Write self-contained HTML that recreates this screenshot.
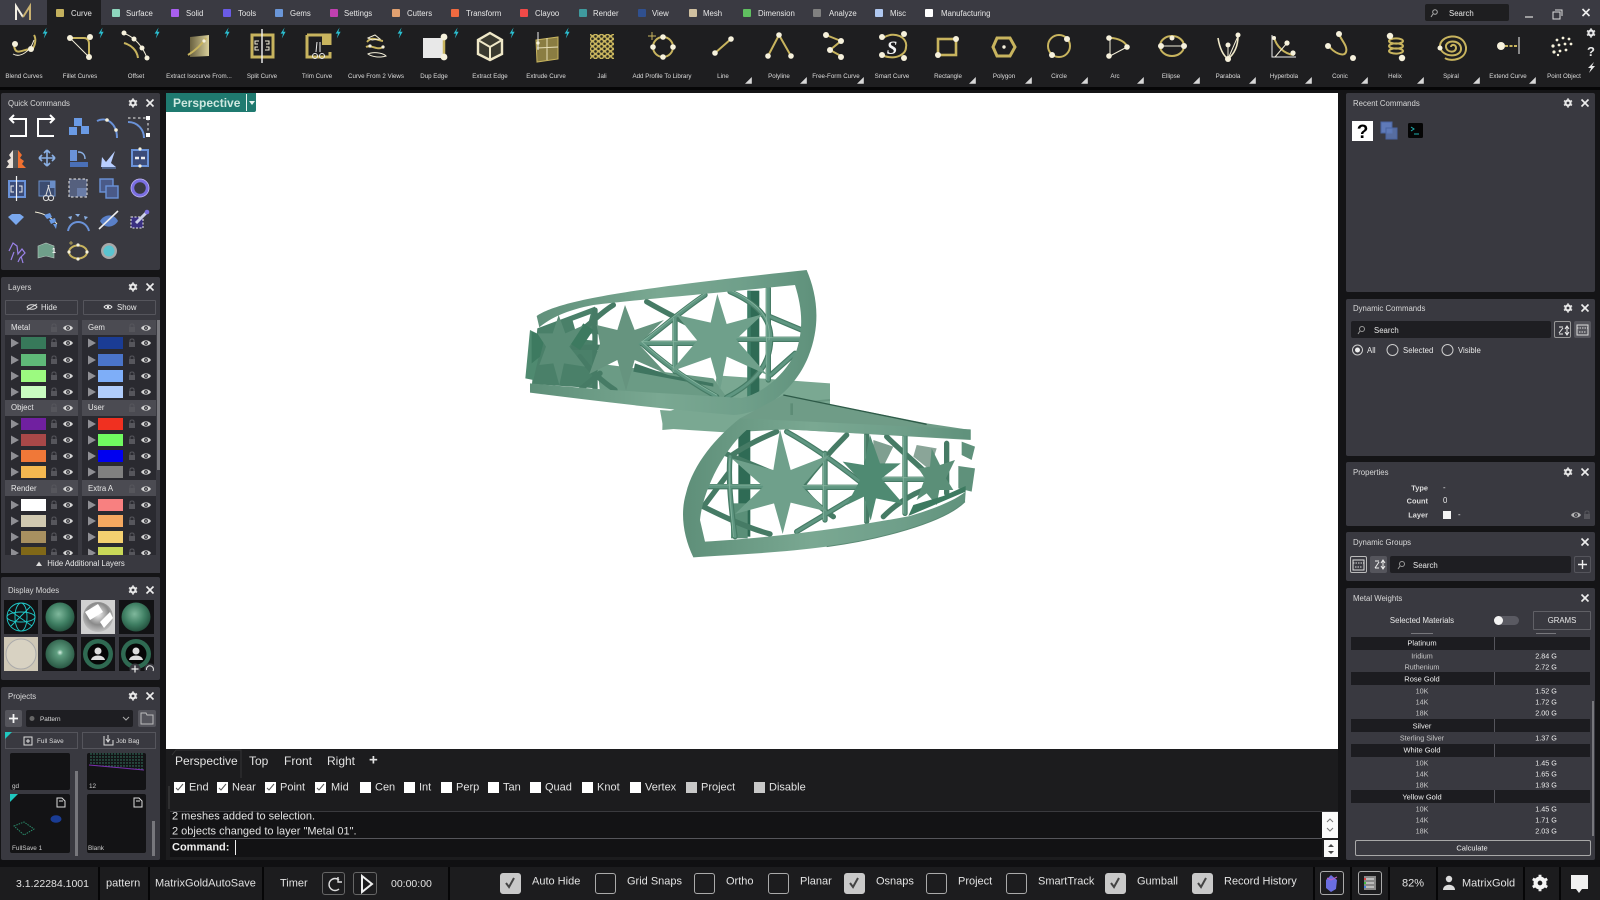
<!DOCTYPE html>
<html><head><meta charset="utf-8"><title>MatrixGold</title>
<style>
html,body{margin:0;padding:0;background:#141416;width:1600px;height:900px;overflow:hidden}
body{position:relative;font-family:"Liberation Sans",sans-serif;color:#ddd}
.b{position:absolute;box-sizing:border-box}
.p{position:absolute;background:#393940;border-radius:2px}
.t{position:absolute;white-space:nowrap;line-height:1;transform:translateY(calc(-50% + 1px))}
.c{transform:translate(-50%,calc(-50% + 1px))}
.r{transform:translate(-100%,calc(-50% + 1px))}
.h{font-size:7.8px;color:#d8d8d8}
.s{font-size:7.8px;color:#e8e8e8}
.l{font-size:6.2px;color:#ddd;top:76px;transform:translate(-50%,calc(-50% + 1px))}
.m{font-size:11px;color:#e2e2e2}
.w{font-size:7.2px;color:#c8c8c8}
.v{font-size:7.2px;color:#eee}
.k{font-size:7.5px;color:#f0f0f0}
.t.w,.t.v,.t.k{transform:translate(-50%,-50%)}
.sq{position:absolute;width:8px;height:8px;top:9px;border-radius:1px}
.cb{position:absolute;width:11px;height:11px;background:#fff;top:782px}
.st{position:absolute;width:21px;height:21px;top:873px;border:1px solid #aaa;border-radius:3px;box-sizing:border-box}
.on{background:#c9c9c9;border-color:#c9c9c9}
.sep{position:absolute;width:2px;top:867px;height:33px;background:#060607}
svg{position:absolute;left:0;top:0;overflow:visible}
.g{stroke:#c8b45e;fill:none;stroke-width:2}
.n{stroke:#f3eed8;fill:none;stroke-width:1}
.d{fill:#f6f1dc}
.u{stroke:#6a92d8;fill:none;stroke-width:2}
.wl{stroke:#fff;fill:none;stroke-width:2}
.tube{fill:none;stroke:#467b65;stroke-width:16;stroke-linecap:round}
.mid{fill:none;stroke:#5f9681;stroke-width:9;stroke-linecap:round}
.hi{fill:none;stroke:#86b6a0;stroke-width:2.5;stroke-linecap:round}
</style></head><body>

<!-- top bar -->
<div class="b" style="left:0;top:0;width:1600px;height:25px;background:#3a3a42"></div>
<div class="b" style="left:47px;top:0;width:54px;height:25px;background:#1e1e20"></div>
<div class="b" style="left:0;top:25px;width:1600px;height:62px;background:#1e1e20"></div>
<div class="b" style="left:0;top:87px;width:1600px;height:3px;background:#060607"></div>

<i class="sq" style="left:56px;background:#c4b15e"></i><div class="t s" style="left:71px;top:13px">Curve</div>
<i class="sq" style="left:112px;background:#8ed6bd"></i><div class="t s" style="left:126px;top:13px">Surface</div>
<i class="sq" style="left:171px;background:#a95ff0"></i><div class="t s" style="left:186px;top:13px">Solid</div>
<i class="sq" style="left:223px;background:#6a5be6"></i><div class="t s" style="left:238px;top:13px">Tools</div>
<i class="sq" style="left:275px;background:#6a96d8"></i><div class="t s" style="left:290px;top:13px">Gems</div>
<i class="sq" style="left:330px;background:#c040b0"></i><div class="t s" style="left:344px;top:13px">Settings</div>
<i class="sq" style="left:392px;background:#e0a070"></i><div class="t s" style="left:407px;top:13px">Cutters</div>
<i class="sq" style="left:451px;background:#f06a40"></i><div class="t s" style="left:466px;top:13px">Transform</div>
<i class="sq" style="left:520px;background:#f04a48"></i><div class="t s" style="left:535px;top:13px">Clayoo</div>
<i class="sq" style="left:579px;background:#3f9a9e"></i><div class="t s" style="left:593px;top:13px">Render</div>
<i class="sq" style="left:638px;background:#30508f"></i><div class="t s" style="left:652px;top:13px">View</div>
<i class="sq" style="left:689px;background:#d0c0a0"></i><div class="t s" style="left:703px;top:13px">Mesh</div>
<i class="sq" style="left:743px;background:#60c060"></i><div class="t s" style="left:758px;top:13px">Dimension</div>
<i class="sq" style="left:813px;background:#808080"></i><div class="t s" style="left:829px;top:13px">Analyze</div>
<i class="sq" style="left:875px;background:#b0c8f0"></i><div class="t s" style="left:890px;top:13px">Misc</div>
<i class="sq" style="left:925px;background:#fff"></i><div class="t s" style="left:941px;top:13px">Manufacturing</div>

<div class="b" style="left:1425px;top:4px;width:84px;height:17px;background:#1e1e20;border-radius:2px"></div>
<div class="t s" style="left:1449px;top:13px">Search</div>

<!-- toolbar labels -->
<div class="t l" style="left:24px">Blend Curves</div>
<div class="t l" style="left:80px">Fillet Curves</div>
<div class="t l" style="left:136px">Offset</div>
<div class="t l" style="left:199px">Extract Isocurve From...</div>
<div class="t l" style="left:262px">Split Curve</div>
<div class="t l" style="left:317px">Trim Curve</div>
<div class="t l" style="left:376px">Curve From 2 Views</div>
<div class="t l" style="left:434px">Dup Edge</div>
<div class="t l" style="left:490px">Extract Edge</div>
<div class="t l" style="left:546px">Extrude Curve</div>
<div class="t l" style="left:602px">Jali</div>
<div class="t l" style="left:662px">Add Profile To Library</div>
<div class="t l" style="left:723px">Line</div>
<div class="t l" style="left:779px">Polyline</div>
<div class="t l" style="left:836px">Free-Form Curve</div>
<div class="t l" style="left:892px">Smart Curve</div>
<div class="t l" style="left:948px">Rectangle</div>
<div class="t l" style="left:1004px">Polygon</div>
<div class="t l" style="left:1059px">Circle</div>
<div class="t l" style="left:1115px">Arc</div>
<div class="t l" style="left:1171px">Ellipse</div>
<div class="t l" style="left:1228px">Parabola</div>
<div class="t l" style="left:1284px">Hyperbola</div>
<div class="t l" style="left:1340px">Conic</div>
<div class="t l" style="left:1395px">Helix</div>
<div class="t l" style="left:1451px">Spiral</div>
<div class="t l" style="left:1508px">Extend Curve</div>
<div class="t l" style="left:1564px">Point Object</div>

<!-- viewport -->
<div class="b" style="left:166px;top:93px;width:1172px;height:656px;background:#fff"></div>
<div class="b" style="left:166px;top:93px;width:90px;height:19px;background:#1f7a70;border-radius:0 0 2px 0"></div>
<div class="t" style="left:173px;top:102px;font-size:12px;color:#cfe8e0;font-weight:bold">Perspective</div>
<div class="b" style="left:246px;top:94px;width:1px;height:17px;background:#e8f4f0"></div>

<!-- below viewport -->
<div class="b" style="left:166px;top:749px;width:1172px;height:111px;background:#1c1c1e"></div>
<div class="t m" style="left:175px;top:760px;font-size:12px">Perspective</div>
<div class="t m" style="left:249px;top:760px;font-size:12px">Top</div>
<div class="t m" style="left:284px;top:760px;font-size:12px">Front</div>
<div class="t m" style="left:327px;top:760px;font-size:12px">Right</div>
<div class="t m" style="left:369px;top:759px;font-size:15px;font-weight:bold">+</div>

<i class="cb" style="left:174px"></i><div class="t m" style="left:189px;top:787px">End</div>
<i class="cb" style="left:217px"></i><div class="t m" style="left:232px;top:787px">Near</div>
<i class="cb" style="left:265px"></i><div class="t m" style="left:280px;top:787px">Point</div>
<i class="cb" style="left:315px"></i><div class="t m" style="left:331px;top:787px">Mid</div>
<i class="cb" style="left:360px"></i><div class="t m" style="left:375px;top:787px">Cen</div>
<i class="cb" style="left:404px"></i><div class="t m" style="left:419px;top:787px">Int</div>
<i class="cb" style="left:441px"></i><div class="t m" style="left:456px;top:787px">Perp</div>
<i class="cb" style="left:488px"></i><div class="t m" style="left:503px;top:787px">Tan</div>
<i class="cb" style="left:530px"></i><div class="t m" style="left:545px;top:787px">Quad</div>
<i class="cb" style="left:582px"></i><div class="t m" style="left:597px;top:787px">Knot</div>
<i class="cb" style="left:630px"></i><div class="t m" style="left:645px;top:787px">Vertex</div>
<i class="cb" style="left:686px;background:#c8c8c8"></i><div class="t m" style="left:701px;top:787px">Project</div>
<i class="cb" style="left:754px;background:#c8c8c8"></i><div class="t m" style="left:769px;top:787px">Disable</div>

<div class="b" style="left:170px;top:811px;width:1168px;height:1px;background:#3a3a3e"></div>
<div class="b" style="left:170px;top:812px;width:1152px;height:26px;background:#131315"></div>
<div class="b" style="left:170px;top:838px;width:1152px;height:1px;background:#55555a"></div>
<div class="b" style="left:170px;top:839px;width:1152px;height:18px;background:#121214"></div>
<div class="t m" style="left:172px;top:816px">2 meshes added to selection.</div>
<div class="t m" style="left:172px;top:831px">2 objects changed to layer "Metal 01".</div>
<div class="t m" style="left:172px;top:847px;font-weight:bold;color:#eee">Command:</div>
<div class="b" style="left:235px;top:840px;width:1px;height:15px;background:#eee"></div>
<div class="b" style="left:1322px;top:812px;width:16px;height:26px;background:#fafafa"></div>
<div class="b" style="left:1324px;top:840px;width:14px;height:17px;background:#fafafa"></div>

<!-- left panels -->
<div class="p" style="left:1px;top:93px;width:159px;height:177px"></div>
<div class="t h" style="left:8px;top:103px">Quick Commands</div>
<div class="p" style="left:1px;top:277px;width:159px;height:296px"></div>
<div class="t h" style="left:8px;top:287px">Layers</div>

<div class="b" style="left:5px;top:300px;width:73px;height:15px;border:1px solid #55555c;border-radius:1px"></div>
<div class="b" style="left:83px;top:300px;width:73px;height:15px;border:1px solid #55555c;border-radius:1px"></div>
<div class="t s" style="left:41px;top:307px">Hide</div>
<div class="t s" style="left:117px;top:307px">Show</div>

<div class="b" style="left:5px;top:320px;width:73px;height:235px;background:#2a2a30"></div>
<div class="b" style="left:82px;top:320px;width:74px;height:235px;background:#2a2a30"></div>
<div class="b" style="left:5px;top:320px;width:73px;height:15px;background:#4b4b52"></div>
<div class="b" style="left:82px;top:320px;width:74px;height:15px;background:#4b4b52"></div>
<div class="b" style="left:5px;top:400px;width:73px;height:16px;background:#4b4b52"></div>
<div class="b" style="left:82px;top:400px;width:74px;height:16px;background:#4b4b52"></div>
<div class="b" style="left:5px;top:480px;width:73px;height:16px;background:#4b4b52"></div>
<div class="b" style="left:82px;top:480px;width:74px;height:16px;background:#4b4b52"></div>
<div class="t s" style="left:11px;top:327px">Metal</div>
<div class="t s" style="left:88px;top:327px">Gem</div>
<div class="t s" style="left:11px;top:407px">Object</div>
<div class="t s" style="left:88px;top:407px">User</div>
<div class="t s" style="left:11px;top:488px">Render</div>
<div class="t s" style="left:88px;top:488px">Extra A</div>
<div class="b" style="left:157px;top:320px;width:3px;height:150px;background:#77777c"></div>
<div class="t s c" style="left:86px;top:563px;z-index:6">Hide Additional Layers</div>

<div class="p" style="left:1px;top:577px;width:159px;height:103px"></div>
<div class="t h" style="left:8px;top:590px">Display Modes</div>
<div class="p" style="left:1px;top:687px;width:159px;height:173px"></div>
<div class="t h" style="left:8px;top:696px">Projects</div>

<div class="b" style="left:5px;top:710px;width:17px;height:17px;background:#55555c;border-radius:2px"></div>
<div class="b" style="left:26px;top:710px;width:107px;height:17px;background:#1e1e22;border-radius:2px"></div>
<div class="b" style="left:138px;top:710px;width:18px;height:17px;background:#55555c;border-radius:2px"></div>
<div class="t" style="left:40px;top:719px;font-size:6.4px;color:#ddd">Pattern</div>
<div class="b" style="left:5px;top:732px;width:73px;height:17px;border:1px solid #55555c"></div>
<div class="b" style="left:82px;top:732px;width:74px;height:17px;border:1px solid #55555c"></div>
<div class="t" style="left:37px;top:741px;font-size:6.4px;color:#ddd">Full Save</div>
<div class="t" style="left:116px;top:741px;font-size:6.4px;color:#ddd">Job Bag</div>
<div class="b" style="left:10px;top:753px;width:60px;height:37px;background:#131315;border-radius:2px"></div>
<div class="b" style="left:87px;top:753px;width:59px;height:37px;background:#131315;border-radius:2px"></div>
<div class="b" style="left:10px;top:794px;width:60px;height:59px;background:#131315;border-radius:2px"></div>
<div class="b" style="left:87px;top:794px;width:59px;height:59px;background:#131315;border-radius:2px"></div>
<div class="t" style="left:12px;top:786px;font-size:6.4px;color:#ccc">gd</div>
<div class="t" style="left:89px;top:786px;font-size:6.4px;color:#ccc">12</div>
<div class="t" style="left:12px;top:848px;font-size:6.4px;color:#ccc">FullSave 1</div>
<div class="t" style="left:88px;top:848px;font-size:6.4px;color:#ccc">Blank</div>
<div class="b" style="left:75px;top:771px;width:3px;height:85px;background:#77777c"></div>
<div class="b" style="left:152px;top:821px;width:3px;height:35px;background:#77777c"></div>

<!-- right panels -->
<div class="p" style="left:1346px;top:93px;width:249px;height:199px"></div>
<div class="t h" style="left:1353px;top:103px">Recent Commands</div>
<div class="p" style="left:1346px;top:299px;width:249px;height:157px"></div>
<div class="t h" style="left:1353px;top:308px">Dynamic Commands</div>
<div class="b" style="left:1351px;top:321px;width:200px;height:17px;background:#1e1e22;border-radius:2px"></div>
<div class="t s" style="left:1374px;top:330px">Search</div>
<div class="b" style="left:1554px;top:321px;width:17px;height:17px;border:1px solid #999;border-radius:2px"></div>
<div class="b" style="left:1574px;top:321px;width:17px;height:17px;background:#55555c;border-radius:2px"></div>
<div class="t s" style="left:1367px;top:350px">All</div>
<div class="t s" style="left:1403px;top:350px">Selected</div>
<div class="t s" style="left:1458px;top:350px">Visible</div>

<div class="p" style="left:1346px;top:462px;width:249px;height:64px"></div>
<div class="t h" style="left:1353px;top:472px">Properties</div>
<div class="t s r" style="left:1428px;top:487px;font-weight:bold;color:#ddd;font-size:7.4px">Type</div>
<div class="t s r" style="left:1428px;top:500px;font-weight:bold;color:#ddd;font-size:7.4px">Count</div>
<div class="t s r" style="left:1428px;top:514px;font-weight:bold;color:#ddd;font-size:7.4px">Layer</div>
<div class="t s" style="left:1443px;top:487px">-</div>
<div class="t s" style="left:1443px;top:500px">0</div>
<div class="b" style="left:1443px;top:511px;width:8px;height:8px;background:#f4f4f4"></div>
<div class="t s" style="left:1458px;top:514px">-</div>

<div class="p" style="left:1346px;top:532px;width:249px;height:49px"></div>
<div class="t h" style="left:1353px;top:542px">Dynamic Groups</div>
<div class="b" style="left:1350px;top:556px;width:17px;height:17px;border:1px solid #bbb;border-radius:2px"></div>
<div class="b" style="left:1370px;top:556px;width:17px;height:17px;background:#55555c;border-radius:2px"></div>
<div class="b" style="left:1390px;top:556px;width:181px;height:17px;background:#1e1e22;border-radius:2px"></div>
<div class="t s" style="left:1413px;top:565px">Search</div>
<div class="b" style="left:1574px;top:556px;width:17px;height:17px;border:1px solid #55555c;border-radius:2px"></div>

<div class="p" style="left:1346px;top:588px;width:249px;height:272px"></div>
<div class="t h" style="left:1353px;top:598px">Metal Weights</div>
<div class="t s c" style="left:1422px;top:620px">Selected Materials</div>
<div class="b" style="left:1494px;top:616px;width:25px;height:9px;background:#5a5a62;border-radius:5px"></div>
<div class="b" style="left:1494px;top:616px;width:9px;height:9px;background:#f4f4f4;border-radius:50%"></div>
<div class="b" style="left:1533px;top:611px;width:58px;height:19px;border:1px solid #606066;border-radius:1px"></div>
<div class="t s c" style="left:1562px;top:620px">GRAMS</div>

<div class="b" style="left:1411px;top:633px;width:22px;height:1px;background:#77777c"></div>
<div class="b" style="left:1536px;top:633px;width:20px;height:1px;background:#77777c"></div>
<div class="b" style="left:1351px;top:637px;width:239px;height:13px;background:#1c1c20"></div>
<div class="b" style="left:1351px;top:672px;width:239px;height:13px;background:#1c1c20"></div>
<div class="b" style="left:1351px;top:719px;width:239px;height:13px;background:#1c1c20"></div>
<div class="b" style="left:1351px;top:744px;width:239px;height:13px;background:#1c1c20"></div>
<div class="b" style="left:1351px;top:790px;width:239px;height:13px;background:#1c1c20"></div>
<div class="b" style="left:1494px;top:637px;width:1px;height:13px;background:#55555c"></div>
<div class="b" style="left:1494px;top:672px;width:1px;height:13px;background:#55555c"></div>
<div class="b" style="left:1494px;top:719px;width:1px;height:13px;background:#55555c"></div>
<div class="b" style="left:1494px;top:744px;width:1px;height:13px;background:#55555c"></div>
<div class="b" style="left:1494px;top:790px;width:1px;height:13px;background:#55555c"></div>
<div class="b" style="left:1592px;top:701px;width:2px;height:135px;background:#77777c"></div>

<div class="t k c" style="left:1422px;top:643px">Platinum</div>
<div class="t w c" style="left:1422px;top:656px">Iridium</div><div class="t v c" style="left:1546px;top:656px">2.84 G</div>
<div class="t w c" style="left:1422px;top:667px">Ruthenium</div><div class="t v c" style="left:1546px;top:667px">2.72 G</div>
<div class="t k c" style="left:1422px;top:679px">Rose Gold</div>
<div class="t w c" style="left:1422px;top:691px">10K</div><div class="t v c" style="left:1546px;top:691px">1.52 G</div>
<div class="t w c" style="left:1422px;top:702px">14K</div><div class="t v c" style="left:1546px;top:702px">1.72 G</div>
<div class="t w c" style="left:1422px;top:713px">18K</div><div class="t v c" style="left:1546px;top:713px">2.00 G</div>
<div class="t k c" style="left:1422px;top:726px">Silver</div>
<div class="t w c" style="left:1422px;top:738px">Sterling Silver</div><div class="t v c" style="left:1546px;top:738px">1.37 G</div>
<div class="t k c" style="left:1422px;top:750px">White Gold</div>
<div class="t w c" style="left:1422px;top:763px">10K</div><div class="t v c" style="left:1546px;top:763px">1.45 G</div>
<div class="t w c" style="left:1422px;top:774px">14K</div><div class="t v c" style="left:1546px;top:774px">1.65 G</div>
<div class="t w c" style="left:1422px;top:785px">18K</div><div class="t v c" style="left:1546px;top:785px">1.93 G</div>
<div class="t k c" style="left:1422px;top:797px">Yellow Gold</div>
<div class="t w c" style="left:1422px;top:809px">10K</div><div class="t v c" style="left:1546px;top:809px">1.45 G</div>
<div class="t w c" style="left:1422px;top:820px">14K</div><div class="t v c" style="left:1546px;top:820px">1.71 G</div>
<div class="t w c" style="left:1422px;top:831px">18K</div><div class="t v c" style="left:1546px;top:831px">2.03 G</div>
<div class="b" style="left:1355px;top:840px;width:236px;height:16px;border:1px solid #a8a8a8;border-radius:2px"></div>
<div class="t k c" style="left:1472px;top:848px">Calculate</div>

<!-- status bar -->
<div class="b" style="left:0;top:860px;width:1600px;height:7px;background:#101012"></div>
<div class="b" style="left:0;top:867px;width:1600px;height:33px;background:#1c1c1e"></div>
<i class="sep" style="left:98px"></i><i class="sep" style="left:148px"></i><i class="sep" style="left:262px"></i><i class="sep" style="left:448px"></i>
<i class="sep" style="left:1313px"></i><i class="sep" style="left:1350px"></i><i class="sep" style="left:1388px"></i><i class="sep" style="left:1436px"></i><i class="sep" style="left:1523px"></i><i class="sep" style="left:1559px"></i>
<div class="t m" style="left:16px;top:883px;font-size:10.5px">3.1.22284.1001</div>
<div class="t m" style="left:106px;top:883px">pattern</div>
<div class="t m" style="left:155px;top:883px">MatrixGoldAutoSave</div>
<div class="t m" style="left:280px;top:883px">Timer</div>
<div class="t m" style="left:391px;top:883px;font-size:10.5px">00:00:00</div>
<div class="b" style="left:322px;top:872px;width:23px;height:23px;border:1px solid #666;border-radius:3px"></div>
<div class="b" style="left:353px;top:872px;width:24px;height:23px;border:1px solid #666;border-radius:3px"></div>
<i class="st on" style="left:500px"></i><div class="t m" style="left:532px;top:881px">Auto Hide</div>
<i class="st" style="left:595px"></i><div class="t m" style="left:627px;top:881px">Grid Snaps</div>
<i class="st" style="left:694px"></i><div class="t m" style="left:726px;top:881px">Ortho</div>
<i class="st" style="left:768px"></i><div class="t m" style="left:800px;top:881px">Planar</div>
<i class="st on" style="left:844px"></i><div class="t m" style="left:876px;top:881px">Osnaps</div>
<i class="st" style="left:926px"></i><div class="t m" style="left:958px;top:881px">Project</div>
<i class="st" style="left:1006px"></i><div class="t m" style="left:1038px;top:881px">SmartTrack</div>
<i class="st on" style="left:1105px"></i><div class="t m" style="left:1137px;top:881px">Gumball</div>
<i class="st on" style="left:1192px"></i><div class="t m" style="left:1224px;top:881px">Record History</div>
<div class="b" style="left:1320px;top:871px;width:24px;height:24px;border:1px solid #aaa;border-radius:3px"></div>
<div class="b" style="left:1358px;top:871px;width:24px;height:24px;border:1px solid #aaa;border-radius:3px"></div>
<div class="t m" style="left:1402px;top:883px">82%</div>
<div class="t m" style="left:1462px;top:883px">MatrixGold</div>

<!-- icon overlay -->
<svg width="1600" height="900" viewBox="0 0 1600 900" style="z-index:5">
<defs>
<g id="eye"><path d="M-5 0C-3-3.5 3-3.5 5 0C3 3.5-3 3.5-5 0Z" fill="#d4d4d4"/><circle r="1.9" fill="#2a2a30"/><circle r=".8" fill="#d4d4d4"/></g>
<g id="lock"><rect x="-3" y="-1" width="6" height="5" fill="#56565c"/><path d="M-2-1V-2.5C-2-4.5 2-4.5 2-2.5V-1" stroke="#56565c" fill="none"/></g>
<path id="tri" d="M0-4.5L8 0L0 4.5Z" fill="#8f8f94"/>
<g id="gear"><circle r="2.6" fill="none" stroke="#e8e8e8" stroke-width="2"/><path d="M0-4.6V4.6M-4-2.3L4 2.3M-4 2.3L4-2.3" stroke="#e8e8e8" stroke-width="1.6"/><circle r="1.4" fill="#393940"/></g>
<path id="x" d="M-3.5-3.5L3.5 3.5M3.5-3.5L-3.5 3.5" stroke="#eee" stroke-width="1.6" fill="none"/>
<path id="bolt" d="M1.6-5.5L-2.4 .6H0L-1.2 5.5L2.6-1.2H.3Z" fill="#2bbfd0"/>
<path id="ct" d="M4 0V4H0Z" fill="#d8d8d8" transform="scale(1.7)"/>
<radialGradient id="sp" cx=".45" cy=".4" r=".65"><stop offset="0" stop-color="#7fb89c"/><stop offset=".55" stop-color="#3f7f63"/><stop offset="1" stop-color="#1f4a38"/></radialGradient>
<radialGradient id="sp2" cx=".5" cy=".45" r=".6"><stop offset="0" stop-color="#d8f0e4"/><stop offset=".18" stop-color="#5f9e80"/><stop offset="1" stop-color="#23503d"/></radialGradient>
<radialGradient id="chrome" cx=".5" cy=".4" r=".6"><stop offset="0" stop-color="#f4f4f4"/><stop offset=".6" stop-color="#8a8a8a"/><stop offset="1" stop-color="#c0c0c0"/></radialGradient>
<linearGradient id="band" x1="0" x2="1" y1="0" y2="0"><stop offset="0" stop-color="#5e8f79"/><stop offset=".45" stop-color="#7aa892"/><stop offset=".75" stop-color="#6f9f8a"/><stop offset="1" stop-color="#5f917b"/></linearGradient>
<linearGradient id="iso" x1="0" x2="1"><stop offset="0" stop-color="#6a6140"/><stop offset="1" stop-color="#d8cf9a"/></linearGradient>
<pattern id="hex" width="6" height="5" patternUnits="userSpaceOnUse"><rect width="6" height="5" fill="#c8b45e"/><circle cx="1.5" cy="1.4" r="1.3" fill="#2a2a20"/><circle cx="4.5" cy="3.8" r="1.3" fill="#2a2a20"/></pattern>
<pattern id="dots" width="3" height="3" patternUnits="userSpaceOnUse"><rect width="3" height="3" fill="#131315"/><circle cx="1" cy="1" r=".7" fill="#3c8a70"/></pattern>
</defs>

<!-- logo -->
<rect x="0" y="0" width="47" height="25" fill="#47474f" opacity=".35"/>
<path d="M16 20V6L23 17" fill="none" stroke="#f4f0e4" stroke-width="2"/>
<path d="M23 17L30 6V20" fill="none" stroke="#c8b070" stroke-width="2"/>

<!-- perspective dropdown -->
<path d="M249 101H255L252 105Z" fill="#e8f4f0"/>

<!-- window controls -->
<path d="M1525 17H1533" stroke="#ddd" stroke-width="1.2"/>
<path d="M1555 10H1562V16M1553 12H1560V19H1553Z" stroke="#ddd" fill="none"/>
<use href="#x" x="1586" y="12.5"/>
<circle cx="1435" cy="12" r="2.3" fill="none" stroke="#aaa"/><path d="M1433 14L1431 17" stroke="#aaa"/>

<!-- toolbar bolts -->
<use href="#bolt" x="45" y="33"/><use href="#bolt" x="101" y="33"/><use href="#bolt" x="157" y="33"/><use href="#bolt" x="227" y="33"/><use href="#bolt" x="283" y="33"/><use href="#bolt" x="338" y="33"/><use href="#bolt" x="400" y="33"/><use href="#bolt" x="456" y="33"/><use href="#bolt" x="512" y="33"/><use href="#bolt" x="567" y="33"/>
<!-- corner triangles -->
<use href="#ct" x="745" y="77"/><use href="#ct" x="800" y="77"/><use href="#ct" x="857" y="77"/><use href="#ct" x="969" y="77"/><use href="#ct" x="1025" y="77"/><use href="#ct" x="1081" y="77"/><use href="#ct" x="1137" y="77"/><use href="#ct" x="1193" y="77"/><use href="#ct" x="1249" y="77"/><use href="#ct" x="1305" y="77"/><use href="#ct" x="1361" y="77"/><use href="#ct" x="1417" y="77"/><use href="#ct" x="1473" y="77"/><use href="#ct" x="1529" y="77"/>

<!-- toolbar icons -->
<path class="g" d="M14 43C14 60 26 46 32 50C36 44 36 38 34 35"/><path class="n" d="M13 54C20 58 30 52 34 40"/><circle class="d" cx="15" cy="44" r="3"/><circle class="d" cx="31" cy="49" r="3"/>
<path class="g" d="M70 38H84Q89 38 89 44V56" stroke-width="3"/><path class="n" d="M70 38L89 57" stroke-width=".6"/><circle class="d" cx="70" cy="38" r="3"/><circle class="d" cx="90" cy="37" r="3"/><circle class="d" cx="89" cy="57" r="3"/>
<path class="g" d="M124 43C131 45 137 50 138 58" stroke-width="3"/><path class="n" d="M123 33C135 37 143 47 147 58"/><circle class="d" cx="124" cy="33" r="2.5"/><circle class="d" cx="134" cy="39" r="2.5"/><circle class="d" cx="142" cy="48" r="2.5"/><circle class="d" cx="147" cy="58" r="2.5"/>
<path d="M190 37L209 35V56L190 57Z" fill="url(#iso)"/><path class="g" d="M188 55C196 50 202 44 206 38"/><circle class="d" cx="204" cy="41" r="1.6"/>
<rect x="252" y="35" width="21" height="22" fill="none" stroke="#c8b45e" stroke-width="3"/><path d="M262 29V63" stroke="#f4f4f4" stroke-width="1.4"/><path class="n" d="M259 41H255V44H258M259 50H255V47H258M265 41H269V44H266M265 50H269V47H266"/>
<path d="M307 35H330V45M307 35V57H330V52" fill="none" stroke="#c8b45e" stroke-width="3"/><rect x="322" y="35" width="8" height="10" fill="#c8b45e"/><path d="M317 42L316 52M320 42L320 52" stroke="#eee" fill="none"/><circle cx="315" cy="56" r="2.5" fill="none" stroke="#eee"/><circle cx="322" cy="56" r="2.5" fill="none" stroke="#eee"/>
<path class="g" d="M367 42C372 36 376 40 383 41M366 47C372 44 378 52 384 46"/><path class="n" d="M368 38L375 35L380 39L372 40ZM368 54C372 52 382 52 386 56C380 58 372 57 368 54Z"/><circle class="d" cx="370" cy="46" r="1.6"/><circle class="d" cx="383" cy="47" r="1.6"/>
<rect x="423" y="38" width="20" height="20" fill="#e8e8e8"/><path d="M444 37V57" stroke="#c8b45e" stroke-width="2.5"/><circle class="d" cx="444" cy="37" r="3.4"/><circle class="d" cx="444" cy="57" r="3.4"/>
<path d="M490 33L502 40V54L490 60L478 54V40Z" fill="#3a3a30" stroke="#efe8c8" stroke-width="2.4"/><path d="M478 40L490 47L502 40M490 47V60" stroke="#efe8c8" stroke-width="2" fill="none"/>
<path d="M536 40L558 37V59L537 62Z" fill="#8a7d42" stroke="#c8b45e"/><path d="M537 48L558 47M547 38V60" stroke="#e8e0b8"/><path d="M538 32V50" stroke="#eee"/><circle class="d" cx="538" cy="43" r="1.6"/>
<rect x="590" y="34" width="24" height="25" fill="url(#hex)"/>
<circle cx="663" cy="47" r="10" class="g" stroke-width="3"/><circle class="d" cx="663" cy="37" r="2.8"/><circle class="d" cx="663" cy="57" r="2.8"/><circle class="d" cx="653" cy="47" r="2.8"/><circle class="d" cx="673" cy="47" r="2.8"/><path d="M652 32V40M648 36H656" stroke="#c8b45e"/>
<path class="g" d="M715 53L731 39"/><circle class="d" cx="715" cy="53" r="2.8"/><circle class="d" cx="731" cy="39" r="2.8"/>
<path class="g" d="M768 56L779 35L791 56" stroke-width="2.4"/><circle class="d" cx="768" cy="56" r="2.8"/><circle class="d" cx="779" cy="35" r="2.8"/><circle class="d" cx="791" cy="56" r="2.8"/>
<path class="g" d="M826 35L841 41L830 50L841 56" stroke-width="3"/><circle class="d" cx="826" cy="35" r="3"/><circle class="d" cx="841" cy="41" r="3"/><circle class="d" cx="830" cy="50" r="3"/><circle class="d" cx="841" cy="57" r="3"/>
<path class="g" d="M883 38C895 30 908 38 906 47C906 54 897 60 884 56"/><text x="892" y="54" font-family="Liberation Serif,serif" font-weight="bold" font-style="italic" font-size="19" fill="#f4f4f4" text-anchor="middle">S</text><circle class="d" cx="904" cy="34" r="3"/><circle class="d" cx="882" cy="37" r="3"/><circle class="d" cx="882" cy="55" r="3"/><circle class="d" cx="904" cy="58" r="3"/>
<rect x="938" y="39" width="18" height="16" fill="none" stroke="#c8b45e" stroke-width="2.6"/><circle class="d" cx="956" cy="39" r="3"/><circle class="d" cx="938" cy="55" r="3"/>
<path d="M997 38H1010L1015 47L1010 56H997L993 47Z" fill="none" stroke="#c8b45e" stroke-width="3"/><circle class="d" cx="1004" cy="47" r="1.7"/>
<circle cx="1059" cy="46" r="11" class="g" stroke-width="2.6"/><circle class="d" cx="1067" cy="39" r="3"/><circle class="d" cx="1052" cy="55" r="3"/>
<path class="g" d="M1110 38C1118 38 1127 42 1127 48" stroke-width="2.6"/><path class="n" d="M1110 38V56L1127 47" stroke-width=".6"/><circle class="d" cx="1109" cy="38" r="2.8"/><circle class="d" cx="1127" cy="47" r="2.8"/><circle class="d" cx="1109" cy="56" r="2.8"/>
<ellipse cx="1172" cy="46" rx="12" ry="10" class="g" stroke-width="2.6"/><path class="n" d="M1160 46H1184"/><circle class="d" cx="1161" cy="46" r="3"/><circle class="d" cx="1184" cy="46" r="3"/><circle class="d" cx="1172" cy="38" r="2.5"/>
<path d="M1218 38C1220 50 1224 56 1228 59C1234 54 1238 46 1238 36" fill="none" stroke="#efe8c8" stroke-width="1.6"/><path class="n" d="M1228 45V59M1238 36L1228 59"/><circle class="d" cx="1238" cy="35" r="2.5"/><circle class="d" cx="1228" cy="45" r="2.5"/><circle class="d" cx="1228" cy="59" r="3"/>
<path d="M1272 35V57H1296" fill="none" stroke="#eee"/><path class="g" d="M1274 37C1276 46 1284 54 1294 55" stroke-width="2.4"/><path class="n" d="M1275 57L1287 43" stroke-width=".6"/><circle class="d" cx="1287" cy="43" r="2.6"/><circle class="d" cx="1293" cy="53" r="2.6"/><circle class="d" cx="1274" cy="38" r="2"/>
<path class="g" d="M1329 46C1333 52 1344 58 1346 52C1348 46 1341 40 1339 34" stroke-width="2.4"/><circle class="d" cx="1339" cy="34" r="3"/><circle class="d" cx="1328" cy="46" r="3"/><circle class="d" cx="1353" cy="58" r="3"/>
<g class="g" stroke-width="2.6"><ellipse cx="1396" cy="41" rx="7" ry="2.6"/><ellipse cx="1396" cy="46" rx="7" ry="2.6"/><ellipse cx="1396" cy="51" rx="7" ry="2.6"/></g><circle class="d" cx="1390" cy="36" r="3.2"/><circle class="d" cx="1402" cy="58" r="3.2"/>
<path class="g" d="M1451 47C1451 44 1456 44 1456 48C1456 53 1447 53 1446 47C1445 40 1460 39 1461 48C1462 58 1442 58 1440 47C1439 35 1463 31 1466 47C1467 60 1450 62 1445 58" stroke-width="2.2"/><circle class="d" cx="1440" cy="48" r="2.5"/>
<circle class="d" cx="1501" cy="46" r="4"/><path d="M1505 46H1518" stroke="#c8b45e" stroke-width="2" stroke-dasharray="3 1.5"/><path d="M1519 37V54" stroke="#f4f4f4"/>
<g class="d"><circle cx="1557" cy="40" r="1.4"/><circle cx="1563" cy="38" r="1.4"/><circle cx="1569" cy="39" r="1.4"/><circle cx="1553" cy="46" r="1.6"/><circle cx="1559" cy="45" r="1.4"/><circle cx="1565" cy="44" r="1.4"/><circle cx="1571" cy="44" r="1.4"/><circle cx="1554" cy="52" r="1.6"/><circle cx="1560" cy="51" r="1.4"/><circle cx="1566" cy="50" r="1.4"/><circle cx="1558" cy="55" r="1.2"/></g>
<use href="#gear" x="1591" y="33"/><text x="1591" y="56" text-anchor="middle" font-size="13" font-weight="bold" fill="#e8e8e8" font-family="Liberation Sans,sans-serif">?</text><path d="M1594 62L1588 68H1591L1589 73L1595 66H1592Z" fill="#e8e8e8"/>

<!-- panel heads -->
<use href="#gear" x="133" y="103"/><use href="#x" x="150" y="103"/>
<use href="#gear" x="133" y="287"/><use href="#x" x="150" y="287"/>
<use href="#gear" x="133" y="590"/><use href="#x" x="150" y="590"/>
<use href="#gear" x="133" y="696"/><use href="#x" x="150" y="696"/>
<use href="#gear" x="1568" y="103"/><use href="#x" x="1585" y="103"/>
<use href="#gear" x="1568" y="308"/><use href="#x" x="1585" y="308"/>
<use href="#gear" x="1568" y="472"/><use href="#x" x="1585" y="472"/>
<use href="#x" x="1585" y="542"/><use href="#x" x="1585" y="598"/>

<!-- quick commands row 1 -->
<path class="wl" d="M10 119H26V136H10M14 115L10 119L14 123"/>
<path class="wl" d="M54 119H38V136H54M50 115L54 119L50 123"/>
<g fill="#6a9ae4"><rect x="74" y="118" width="8" height="8"/><rect x="69" y="127" width="8" height="8"/><rect x="81" y="126" width="8" height="8"/></g>
<path class="u" d="M97 121C107 116 117 124 117 138"/><circle class="d" cx="107" cy="120" r="1.8"/><circle class="d" cx="116" cy="130" r="1.8"/>
<path class="u" d="M128 122C138 122 144 130 144 138"/><path d="M128 118H148V136" stroke="#eee" stroke-dasharray="2.5 2.5" fill="none"/><rect x="146" y="116" width="4" height="4" fill="#fff"/><rect x="146" y="133" width="4" height="4" fill="#fff"/>
<!-- row 2 -->
<path d="M13 150H18V168H13Z" fill="#555"/><path d="M18 150L22 155L20 158L24 161L22 164L26 168H18Z" fill="#f07030"/><path d="M13 150L9 155L11 158L7 161L9 164L6 168H13Z" fill="#e8e0d8"/>
<path d="M47 150V166M39 158H55M47 150L44 153M47 150L50 153M47 166L44 163M47 166L50 163M39 158L42 155M39 158L42 161M55 158L52 155M55 158L52 161" stroke="#8ab0e4" fill="none" stroke-width="1.6"/>
<rect x="70" y="150" width="7" height="11" fill="#6a92d8"/><rect x="70" y="162" width="18" height="5" fill="#4a70b8"/><path d="M78 152C83 152 85 155 85 159" stroke="#8ab0e4" fill="none" stroke-width="1.4"/>
<path d="M101 167L102 157L106 162L115 151L111 163L116 167Z" fill="#b8ceff"/><path d="M102 168H116" stroke="#6a92d8"/>
<rect x="132" y="150" width="16" height="16" fill="#3c4c78" stroke="#6a92d8" stroke-width="2"/><path d="M135 158H145" stroke="#eee" stroke-width="2.4" stroke-dasharray="4 2"/><circle class="d" cx="140" cy="149" r="1.6"/><circle class="d" cx="140" cy="166" r="1.6"/>
<!-- row 3 -->
<rect x="9" y="181" width="16" height="16" fill="#3c4c78" stroke="#6a92d8" stroke-width="2"/><path d="M16.5 176V201" stroke="#f4f4f4" stroke-width="1.2"/><path d="M14 186H11V192H14M19 186H22V192H19" stroke="#eee" fill="none"/>
<rect x="39" y="181" width="16" height="15" fill="#3c4c70" stroke="#6a8ec8"/><rect x="50" y="181" width="5" height="7" fill="#6a8ec8"/><circle cx="46" cy="198" r="2.6" fill="none" stroke="#ddd"/><circle cx="51" cy="198" r="2.6" fill="none" stroke="#ddd"/><path d="M46 195L49 185M51 195L48 185" stroke="#ddd"/>
<rect x="69" y="179" width="18" height="18" fill="#55607e" stroke="#eee" stroke-dasharray="2.5 2"/><rect x="77" y="188" width="9" height="8" fill="#6a7da8"/>
<rect x="100" y="179" width="13" height="13" fill="#4a5a88" stroke="#6a92d8" stroke-width="1.4"/><rect x="106" y="186" width="12" height="12" fill="#4a5a88" stroke="#6a92d8" stroke-width="1.4"/>
<circle cx="140" cy="188" r="7.5" fill="none" stroke="#7a6ee0" stroke-width="3.5"/><circle cx="140" cy="188" r="9" fill="none" stroke="#c4bcf4" stroke-width=".7"/>
<!-- row 4 -->
<path d="M8 217L12 214H20L24 217L16 225Z" fill="#7aa8ee"/>
<path class="n" d="M35 212C42 213 50 216 57 224"/><g fill="#6a9ae4"><path d="M44 215L50 213L52 217L47 219Z"/><path d="M49 220L55 218L56 222L51 224Z"/><path d="M53 224L57 224L56 229Z"/></g>
<path class="u" d="M68 231C70 219 86 219 89 231" stroke-width="1.6"/><g fill="#8ab0e4"><path d="M75 214H80L78 217Z"/><path d="M68 217L72 216L71 220Z"/><path d="M88 217L84 216L85 220Z"/></g>
<path d="M100 221C104 214 114 213 118 221C114 228 104 229 100 221Z" fill="#5a80c8"/><path d="M99 229L118 211" stroke="#eee" stroke-width="1.6"/>
<rect x="131" y="217" width="12" height="11" fill="#3a3080" stroke="#eee" stroke-dasharray="2 1.5"/><path d="M136 223L147 212" stroke="#ccd0e8" stroke-width="3"/><circle cx="147" cy="212" r="2.3" fill="#7a6ee0"/>
<!-- row 5 -->
<path d="M9 251L13 243L17 246L18 254L22 249L25 253L20 258L18 262M14 252L11 260M21 256L23 263" stroke="#9a82e8" fill="none" stroke-width="1.2"/>
<path d="M38 246L46 243L54 246V258L46 256L38 258Z" fill="#6f9f8a" stroke="#b8c8c0" stroke-width=".6"/><text x="54" y="253" font-size="7" font-weight="bold" fill="#fff" font-family="Liberation Sans,sans-serif" text-anchor="middle">1</text>
<ellipse cx="78" cy="252" rx="9" ry="6.5" class="g"/><circle class="d" cx="78" cy="245" r="1.6"/><circle class="d" cx="78" cy="259" r="1.6"/><circle class="d" cx="69" cy="252" r="1.6"/><circle class="d" cx="87" cy="252" r="1.6"/><path d="M71 241V245M69 243H73" stroke="#c8b45e" stroke-width=".8"/>
<circle cx="109" cy="251" r="8" fill="#a8a8a8"/><circle cx="109" cy="251" r="5.5" fill="#5ac4d0"/>

<!-- recent icons -->
<rect x="1352" y="121" width="21" height="20" fill="#fff"/><text x="1362.5" y="138" font-size="19" font-weight="bold" text-anchor="middle" fill="#000" font-family="Liberation Sans,sans-serif">?</text>
<rect x="1381" y="122" width="11" height="11" fill="#5f7ab8" stroke="#4a64a0"/><rect x="1386" y="128" width="11" height="11" fill="#5f7ab8" stroke="#4a64a0" fill-opacity=".8"/>
<rect x="1408" y="123" width="15" height="15" rx="1.5" fill="#050505"/><path d="M1411 127L1414 129L1411 131M1414 134H1419" stroke="#20b0b0" fill="none"/>
<!-- dyn commands -->
<circle cx="1362" cy="329" r="2.5" fill="none" stroke="#999"/><path d="M1360 331L1358 334" stroke="#999"/>
<path d="M1559 327H1563M1559 333L1563 328M1559 334H1563M1567 327V334M1565 329L1567 326L1569 329M1565 332L1567 335L1569 332" stroke="#eee" fill="none"/>
<rect x="1577" y="325" width="11" height="10" fill="none" stroke="#ddd"/><path d="M1577 328H1588M1579 332H1586" stroke="#ddd" stroke-dasharray="1.5 1"/>
<circle cx="1357.5" cy="350" r="5" fill="none" stroke="#ccc"/><circle cx="1357.5" cy="350" r="2.5" fill="#eee"/>
<circle cx="1392.5" cy="350" r="5.5" fill="none" stroke="#ccc"/><circle cx="1447.5" cy="350" r="5.5" fill="none" stroke="#ccc"/>
<use href="#eye" x="1576" y="515" opacity=".8"/><use href="#lock" x="1587" y="515"/>
<!-- dyn groups -->
<rect x="1353" y="560" width="11" height="10" fill="none" stroke="#ddd"/><path d="M1353 563H1364M1355 567H1362" stroke="#ddd" stroke-dasharray="1.5 1"/>
<path d="M1375 561H1379M1375 568L1379 562M1375 568H1379M1383 561V568M1381 563L1383 560L1385 563M1381 566L1383 569L1385 566" stroke="#eee" fill="none"/>
<circle cx="1402" cy="564" r="2.5" fill="none" stroke="#999"/><path d="M1400 566L1398 569" stroke="#999"/>
<path d="M1582.5 560V569M1578 564.5H1587" stroke="#eee" stroke-width="1.4"/>

<!-- layers buttons -->
<path d="M27 307C29 304 35 304 37 307C35 310 29 310 27 307ZM27 310L37 304" stroke="#ddd" fill="none"/>
<path d="M104 307C106 304.5 110 304.5 112 307C110 309.5 106 309.5 104 307Z" fill="none" stroke="#eee"/><circle cx="108" cy="307" r="1.2" fill="#eee"/>

<!-- layers rows -->
<use href="#lock" x="54" y="328"/><use href="#eye" x="68" y="328"/><use href="#lock" x="132" y="328"/><use href="#eye" x="146" y="328"/>
<use href="#lock" x="54" y="408"/><use href="#eye" x="68" y="408"/><use href="#lock" x="132" y="408"/><use href="#eye" x="146" y="408"/>
<use href="#lock" x="54" y="489"/><use href="#eye" x="68" y="489"/><use href="#lock" x="132" y="489"/><use href="#eye" x="146" y="489"/>
<use href="#tri" x="11" y="343"/><rect x="21" y="337" width="25" height="12" fill="#37795a"/><use href="#lock" x="54" y="343"/><use href="#eye" x="68" y="343"/>
<use href="#tri" x="11" y="360"/><rect x="21" y="354" width="25" height="12" fill="#5fb878"/><use href="#lock" x="54" y="360"/><use href="#eye" x="68" y="360"/>
<use href="#tri" x="11" y="376"/><rect x="21" y="370" width="25" height="12" fill="#9cfa80"/><use href="#lock" x="54" y="376"/><use href="#eye" x="68" y="376"/>
<use href="#tri" x="11" y="392"/><rect x="21" y="386" width="25" height="12" fill="#c8fcc0"/><use href="#lock" x="54" y="392"/><use href="#eye" x="68" y="392"/>
<use href="#tri" x="88" y="343"/><rect x="98" y="337" width="25" height="12" fill="#1a3c94"/><use href="#lock" x="132" y="343"/><use href="#eye" x="146" y="343"/>
<use href="#tri" x="88" y="360"/><rect x="98" y="354" width="25" height="12" fill="#4a74c8"/><use href="#lock" x="132" y="360"/><use href="#eye" x="146" y="360"/>
<use href="#tri" x="88" y="376"/><rect x="98" y="370" width="25" height="12" fill="#7eaef8"/><use href="#lock" x="132" y="376"/><use href="#eye" x="146" y="376"/>
<use href="#tri" x="88" y="392"/><rect x="98" y="386" width="25" height="12" fill="#b0ccfa"/><use href="#lock" x="132" y="392"/><use href="#eye" x="146" y="392"/>
<use href="#tri" x="11" y="424"/><rect x="21" y="418" width="25" height="12" fill="#7020a0"/><use href="#lock" x="54" y="424"/><use href="#eye" x="68" y="424"/>
<use href="#tri" x="11" y="440"/><rect x="21" y="434" width="25" height="12" fill="#a84848"/><use href="#lock" x="54" y="440"/><use href="#eye" x="68" y="440"/>
<use href="#tri" x="11" y="456"/><rect x="21" y="450" width="25" height="12" fill="#f07838"/><use href="#lock" x="54" y="456"/><use href="#eye" x="68" y="456"/>
<use href="#tri" x="11" y="472"/><rect x="21" y="466" width="25" height="12" fill="#f4b850"/><use href="#lock" x="54" y="472"/><use href="#eye" x="68" y="472"/>
<use href="#tri" x="88" y="424"/><rect x="98" y="418" width="25" height="12" fill="#f03020"/><use href="#lock" x="132" y="424"/><use href="#eye" x="146" y="424"/>
<use href="#tri" x="88" y="440"/><rect x="98" y="434" width="25" height="12" fill="#70fa60"/><use href="#lock" x="132" y="440"/><use href="#eye" x="146" y="440"/>
<use href="#tri" x="88" y="456"/><rect x="98" y="450" width="25" height="12" fill="#0000f0"/><use href="#lock" x="132" y="456"/><use href="#eye" x="146" y="456"/>
<use href="#tri" x="88" y="472"/><rect x="98" y="466" width="25" height="12" fill="#808080"/><use href="#lock" x="132" y="472"/><use href="#eye" x="146" y="472"/>
<use href="#tri" x="11" y="505"/><rect x="21" y="499" width="25" height="12" fill="#fff"/><use href="#lock" x="54" y="505"/><use href="#eye" x="68" y="505"/>
<use href="#tri" x="11" y="521"/><rect x="21" y="515" width="25" height="12" fill="#d0c8b0"/><use href="#lock" x="54" y="521"/><use href="#eye" x="68" y="521"/>
<use href="#tri" x="11" y="537"/><rect x="21" y="531" width="25" height="12" fill="#a89060"/><use href="#lock" x="54" y="537"/><use href="#eye" x="68" y="537"/>
<use href="#tri" x="88" y="505"/><rect x="98" y="499" width="25" height="12" fill="#f88080"/><use href="#lock" x="132" y="505"/><use href="#eye" x="146" y="505"/>
<use href="#tri" x="88" y="521"/><rect x="98" y="515" width="25" height="12" fill="#f4a860"/><use href="#lock" x="132" y="521"/><use href="#eye" x="146" y="521"/>
<use href="#tri" x="88" y="537"/><rect x="98" y="531" width="25" height="12" fill="#f4d070"/><use href="#lock" x="132" y="537"/><use href="#eye" x="146" y="537"/>
<use href="#tri" x="11" y="553"/><rect x="21" y="547" width="25" height="8" fill="#806818"/><use href="#lock" x="54" y="553"/><use href="#eye" x="68" y="553"/>
<use href="#tri" x="88" y="553"/><rect x="98" y="547" width="25" height="8" fill="#c8d858"/><use href="#lock" x="132" y="553"/><use href="#eye" x="146" y="553"/>
<rect x="1" y="555" width="159" height="18" fill="#393940"/>
<path d="M36 566L42 566L39 561.5Z" fill="#ddd"/>

<!-- display modes -->
<rect x="4" y="600" width="34" height="34" fill="#121214"/>
<g fill="none" stroke="#20c8c8" stroke-width=".9"><circle cx="21" cy="617" r="14"/><ellipse cx="21" cy="617" rx="6" ry="14"/><ellipse cx="21" cy="617" rx="14" ry="5"/><path d="M9 610L32 626M11 626L30 607"/></g>
<rect x="42" y="600" width="35" height="34" fill="#121214"/><circle cx="60" cy="617" r="14.5" fill="url(#sp)"/>
<rect x="81" y="600" width="34" height="34" fill="#d0d0d0"/><circle cx="98" cy="617" r="15" fill="url(#chrome)"/><path d="M85 612L98 604L103 612L90 620ZM100 622L110 612L113 618L104 628Z" fill="#fff"/>
<rect x="119" y="600" width="35" height="34" fill="#121214"/><circle cx="136" cy="617" r="14.5" fill="url(#sp)"/>
<rect x="4" y="637" width="34" height="34" fill="#cfc8b6"/><circle cx="21" cy="654" r="15" fill="#d8d2c2" stroke="#aaa"/>
<rect x="42" y="637" width="35" height="34" fill="#121214"/><circle cx="60" cy="654" r="14.5" fill="url(#sp2)"/>
<rect x="81" y="637" width="34" height="34" fill="#121214"/><circle cx="98" cy="654" r="15" fill="#2f6a52"/><circle cx="98" cy="654" r="10.5" fill="#060606"/><circle cx="98" cy="651" r="3.5" fill="#ddd"/><path d="M91 660C92 654 104 654 105 660Z" fill="#ddd"/>
<rect x="119" y="637" width="35" height="34" fill="#121214"/><circle cx="136" cy="654" r="15" fill="#2f6a52"/><circle cx="136" cy="654" r="10.5" fill="#060606"/><circle cx="136" cy="651" r="3.5" fill="#ddd"/><path d="M129 660C130 654 142 654 143 660Z" fill="#ddd"/>
<circle cx="135" cy="669" r="5.5" fill="#393940"/><path d="M135 665.5V672.5M131.5 669H138.5" stroke="#eee" stroke-width="1.2"/>
<circle cx="150" cy="669" r="5.5" fill="#393940"/><path d="M146.5 670A3.5 3.5 0 1 1 153 671" stroke="#ddd" fill="none"/>

<!-- projects -->
<path d="M13.5 714V723M9 718.5H18" stroke="#f4f4f4" stroke-width="1.8"/>
<circle cx="32" cy="718.5" r="2.5" fill="#666"/><path d="M123 717L126 720L129 717" stroke="#aaa" fill="none"/>
<path d="M141 713H146L147 715H153V724H141Z" fill="none" stroke="#bbb"/>
<path d="M5 732H12L5 739Z" fill="#20c8c0"/>
<rect x="24" y="737" width="8" height="8" fill="none" stroke="#ddd"/><path d="M28 739V743M26 741H30" stroke="#ddd"/>
<path d="M104 736V745H113V740M108 735V741M106 739L108 742L110 739" stroke="#ddd" fill="none"/>
<path d="M89 753H144V770L89 765Z" fill="url(#dots)"/><path d="M89 765L144 770" stroke="#7a30b0"/>
<path d="M10 794H18L10 802Z" fill="#20c8c0"/>
<path d="M14 826L24 822L34 829L24 835Z" fill="none" stroke="#2a8a6a" stroke-dasharray="1.5 1"/><ellipse cx="56" cy="819" rx="5.5" ry="3.8" fill="#1a3c94"/>
<path d="M57 798H62L65 801V807H57ZM59 801H63" stroke="#ddd" fill="none"/><path d="M134 798H139L142 801V807H134ZM136 801H140" stroke="#ddd" fill="none"/>

<!-- main check marks -->
<g stroke="#555" fill="none" stroke-width="1"><path d="M176 788L178 790L183 784"/><path d="M219 788L221 790L226 784"/><path d="M267 788L269 790L274 784"/><path d="M317 788L319 790L324 784"/></g>
<path d="M172 755L176 750H241V778" stroke="#444" fill="none" opacity=".6"/>
<path d="M169 786V809" stroke="#444"/>
<path d="M1327 826L1330 823L1333 826M1327 832L1330 835L1333 832" stroke="#777" fill="none" transform="translate(0 -4)"/>
<path d="M1331 844L1328 847H1334ZM1331 854L1328 851H1334Z" fill="#444"/>

<!-- status icons -->
<g stroke="#444" fill="none" stroke-width="2"><path d="M506 883L509 887L514 878"/><path d="M850 883L853 887L858 878"/><path d="M1111 883L1114 887L1119 878"/><path d="M1198 883L1201 887L1206 878"/></g>
<path d="M339 880A6 6 0 1 0 339 889M338 877V882H342" stroke="#ddd" fill="none" stroke-width="1.4"/>
<path d="M362 876L372 884L362 892Z" fill="none" stroke="#eee" stroke-width="2"/>
<path d="M1326 880L1331 875L1337 880L1336 889L1331 892L1326 888Z" fill="#6a6ee0"/><path d="M1327 878L1331 880L1337 877" stroke="#c060c0" fill="none"/>
<rect x="1364" y="876" width="12" height="14" fill="#888"/><path d="M1366 879H1374M1366 883H1374M1366 887H1374" stroke="#eee"/><rect x="1364" y="878" width="2" height="2" fill="#e04040"/><rect x="1364" y="882" width="2" height="2" fill="#40c040"/><rect x="1364" y="886" width="2" height="2" fill="#4080e0"/>
<circle cx="1449" cy="879" r="3.2" fill="#ddd"/><path d="M1443 890C1443 883 1455 883 1455 890Z" fill="#ddd"/>
<g transform="translate(1540 883) scale(1.8)"><circle r="2.6" fill="none" stroke="#f4f4f4" stroke-width="2"/><path d="M0-4.6V4.6M-4-2.3L4 2.3M-4 2.3L4-2.3" stroke="#f4f4f4" stroke-width="1.6"/><circle r="1.3" fill="#1c1c1e"/></g>
<path d="M1571 875H1588V889H1582L1579 893L1576 889H1571Z" fill="#f0f0f0"/>

<!-- RING: upper band -->
<g transform="translate(500 250) scale(.33333)">
<path d="M488 490L487 540L690 522L760 490L990 482L990 400L650 376L640 440Z" fill="#7aa892"/>
<path d="M690 480L990 450" stroke="#5b8a74" stroke-width="6" opacity=".6"/>
<rect x="742" y="122" width="36" height="318" fill="#2f6b55"/><rect x="742" y="122" width="10" height="318" fill="#3f7f68"/>
<path d="M112 235L285 170L292 415L96 402Z" fill="#4a8069"/>
<path d="M218 212L272 192L262 232L232 262Z" fill="#fff"/><path d="M240 268L276 250L282 272Z" fill="#fff"/><path d="M302 250L330 278L300 285Z" fill="#fff"/>
<path d="M290 340L640 385L680 442L300 425Z" fill="#6b9b85"/>
<path d="M405 340L505 375L640 400L640 410L400 365Z" fill="#3f7560"/>
<g class="tube">
<path d="M615 135C540 185 480 240 425 280C480 330 550 385 650 440"/>
<path d="M440 155C500 190 560 220 640 260"/>
<path d="M690 125C770 160 815 205 812 270C810 340 770 395 680 442"/>
<path d="M420 280H600M710 268H905"/>
<path d="M525 205V365M805 115V390"/>
<path d="M810 200L905 240M812 375L885 310"/>
<path d="M285 180V415M340 165C300 190 280 215 245 240"/>
<path d="M220 292H330M240 320C270 360 300 390 345 420M300 370L245 415"/>
<path d="M285 240L350 270"/>
</g>
<g class="mid">
<path d="M615 135C540 185 480 240 425 280C480 330 550 385 650 440"/>
<path d="M690 125C770 160 815 205 812 270C810 340 770 395 680 442"/>
<path d="M420 280H600M710 268H905"/>
<path d="M525 205V365M805 115V390"/>
<path d="M810 200L905 240M812 375L885 310"/>
</g>
<g class="hi">
<path d="M615 130C540 180 480 235 425 275C480 325 550 380 650 435"/>
<path d="M690 120C770 155 815 200 807 270"/>
<path d="M420 275H600M710 263H905"/>
<path d="M520 205V365M800 115V390"/>
</g>
<path d="M76 385L90 240L130 260L100 390Z" fill="#4f8a70"/>
<path d="M95 245L135 260L120 320L95 340Z" fill="#3d7a60"/>
<path d="M210 280L250 220L280 240L240 300Z" fill="#3d7a60"/>
<path fill="#6fa08b" d="M652 132L680 222L790 192L708 268L802 375L680 320L660 422L632 322L512 365L592 272L530 195L632 218Z"/>
<path fill="#66947f" d="M375 165L404 240L492 210L416 282L500 372L404 330L378 422L352 330L268 372L300 282L290 225L352 240Z"/>
<path fill="#5b8d77" d="M176 195L196 250L250 226L208 290L255 350L192 340L178 405L160 340L118 345L138 290L112 250L158 250Z"/>
<path fill="url(#band)" fill-rule="evenodd" d="M110 198C180 150 400 115 920 60C950 130 965 220 925 320C885 420 790 492 700 495C500 478 300 455 90 428L90 400C300 420 500 430 725 444C790 430 860 370 890 300C912 230 905 170 885 105C640 130 400 150 280 165C200 180 150 205 118 232Z"/>
</g>

<!-- RING: lower band -->
<g transform="translate(660 390) scale(.33333)">
<path d="M240 85L370 15L800 100L932 120V150L380 118L250 125Z" fill="#6f9c87"/>
<path d="M370 15L800 103" stroke="#2e5a48" stroke-width="4"/>
<path d="M0 60L10 115L210 128L240 85L150 70Z" fill="#7aa892"/>
<path d="M395 40V75" stroke="#5d8c76" stroke-width="8"/>
<rect x="235" y="120" width="36" height="320" fill="#2f6b55"/><rect x="213" y="340" width="50" height="105" fill="#5a8f78"/>
<path d="M770 165L830 175L810 240L760 200Z" fill="#8aa598"/>
<path d="M640 150L700 170L670 230L640 210Z" fill="#7f9f90"/>
<g class="tube">
<path d="M350 125C290 150 235 180 210 200C205 260 210 330 225 440"/>
<path d="M195 190L340 250"/>
<path d="M120 345C170 370 250 410 330 432"/>
<path d="M380 125C460 170 530 220 600 275"/>
<path d="M560 135C510 185 470 230 425 290C450 330 490 360 520 380"/>
<path d="M125 290H310M425 292H590M665 268H800"/>
<path d="M495 190V390M620 135V395M735 140V370"/>
<path d="M410 425C450 400 520 360 600 310M670 380C700 350 740 320 790 300"/>
<path d="M680 140C720 180 770 220 810 260"/>
<path d="M205 250L130 350"/>
<path d="M860 160V310"/>
</g>
<g class="mid">
<path d="M210 200C205 260 210 330 225 440"/>
<path d="M125 290H310M425 292H590M665 268H800"/>
<path d="M495 190V390M735 140V370"/>
<path d="M380 125C460 170 530 220 600 275"/>
<path d="M410 425C450 400 520 360 600 310"/>
</g>
<g class="hi">
<path d="M210 205C205 260 210 330 220 440"/>
<path d="M125 285H310M425 287H590M665 263H800"/>
<path d="M490 190V390M615 135V395M730 140V370"/>
</g>
<path fill="#6fa08b" d="M360 118L392 240L508 195L426 290L503 365L392 338L368 432L342 340L225 372L310 290L215 205L340 240Z"/>
<path fill="#4f8a72" d="M630 135L660 220L722 220L664 266L730 342L648 325L632 392L612 320L560 345L600 270L548 215L612 225Z"/>
<path fill="#5b8f78" d="M815 175L840 225L885 210L858 265L880 300L838 300L830 345L800 310L770 330L795 265L775 235L810 230Z"/>
<path d="M905 155L945 170L935 210L905 195ZM895 228L945 235L935 305L895 295Z" fill="#5f917b"/>
<path d="M745 378L917 305L917 288L850 318L760 345Z" fill="#3d7a60"/>
<path fill="url(#band)" fill-rule="evenodd" d="M240 85L932 118V148L380 118L260 120C200 170 130 290 120 390L135 455C300 445 500 425 750 378C810 360 880 335 917 305L915 335C850 400 650 450 500 470C350 490 200 495 100 502C70 440 60 370 78 310C100 220 170 140 240 85Z"/>
<path d="M500 470C650 450 850 400 915 335" stroke="#5a8a74" stroke-width="3" fill="none"/>
</g>
</svg>
</body></html>
